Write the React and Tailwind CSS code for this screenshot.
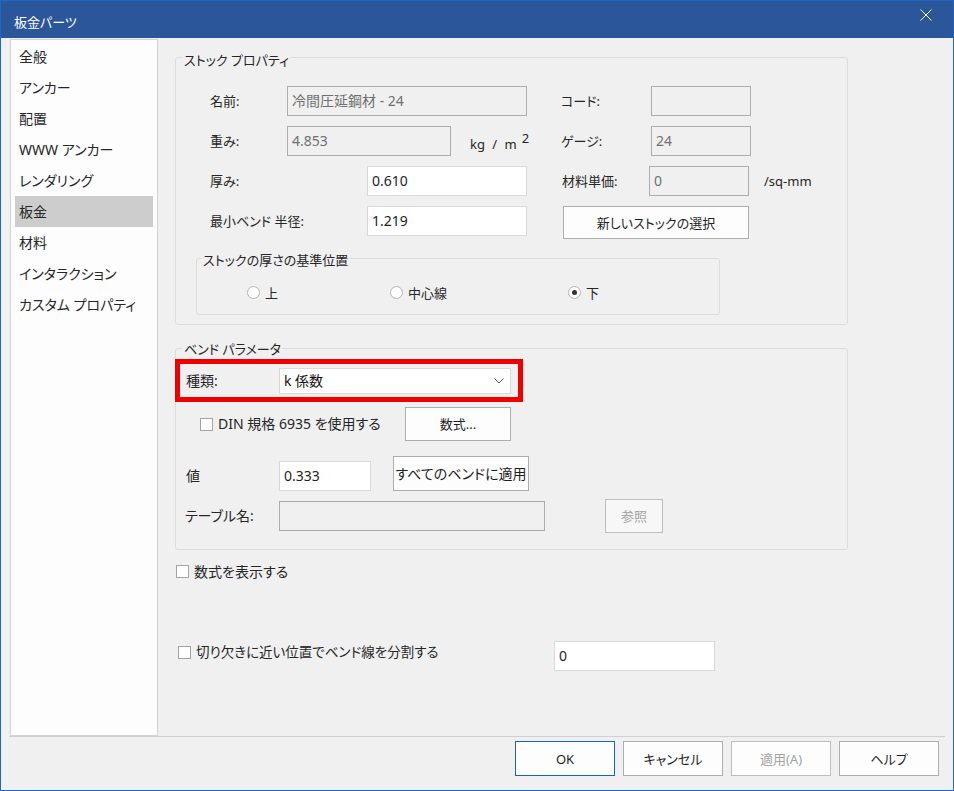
import React from "react";

const FONT = "font-['Noto_Sans','Noto_Sans_CJK_JP',sans-serif] [font-feature-settings:'palt']";

function Field({ value = "", w, h = 30, disabled = false }) {
  return (
    <div
      className={
        "flex items-center pl-[4px] text-[14px] leading-[16px] border shrink-0 " +
        (disabled
          ? "border-[#adadad] bg-[#f0f0f0] text-[#707070]"
          : "border-[#d9d9d9] bg-white text-[#1e1e1e]")
      }
      style={{ width: w, height: h }}
    >
      {value}
    </div>
  );
}

function Btn({ children, w, h, disabled = false, primary = false, className = "" }) {
  return (
    <div
      className={
        "flex items-center justify-center text-[13px] leading-[16px] border shrink-0 " +
        (primary
          ? "border-[#1e62c0] bg-[#fdfdfd] text-[#1e1e1e] "
          : disabled
          ? "border-[#bdbdbd] bg-[#f7f7f7] text-[#a3a3a3] "
          : "border-[#adadad] bg-[#fdfdfd] text-[#1e1e1e] ") +
        className
      }
      style={{ width: w, height: h }}
    >
      {children}
    </div>
  );
}

function Check() {
  return <div className="w-[13px] h-[13px] border border-[#a3a3a3] bg-white shrink-0" />;
}

function Radio({ checked }) {
  return (
    <div className="w-[13px] h-[13px] rounded-full border border-[#b3b3b3] bg-white flex items-center justify-center shrink-0">
      {checked && <div className="w-[5px] h-[5px] rounded-full bg-[#333]" />}
    </div>
  );
}

const sideItems = [
  "全般",
  "アンカー",
  "配置",
  "WWW アンカー",
  "レンダリング",
  "板金",
  "材料",
  "インタラクション",
  "カスタム プロパティ",
];

export default function App() {
  return (
    <div className={"w-[954px] h-[791px] border border-[#1c66cc] bg-[#f0f0f0] flex flex-col text-[#262626] " + FONT}>
      {/* Title bar */}
      <div className="h-[37px] bg-[#2b579a] flex justify-between items-start shrink-0">
        <div className="mt-[13px] ml-[13px] text-[13px] leading-[16px] text-white">板金パーツ</div>
        <svg className="mt-[8px] mr-[21px]" width="12" height="12" viewBox="0 0 12 12">
          <path d="M0.5 0.5 L11.5 11.5 M11.5 0.5 L0.5 11.5" stroke="#ffffff" strokeWidth="1" fill="none" />
        </svg>
      </div>

      {/* Body */}
      <div className="h-[698px] flex pl-[9px] shrink-0">
        {/* Sidebar */}
        <div className="mt-[1px] w-[148px] h-[697px] border border-[#d3d3d3] bg-[#fdfdfd] pt-[1px] shrink-0">
          {sideItems.map((t) => (
            <div
              key={t}
              className={
                "mx-[4px] h-[31px] pl-[4px] flex items-center text-[14px] leading-[16px] " +
                (t === "板金" ? "bg-[#cdcdcd]" : "")
              }
            >
              {t}
            </div>
          ))}
        </div>

        {/* Right panel */}
        <div className="flex-1 pl-[17px]">
          {/* Stock properties */}
          <div className="relative mt-[19px] w-[673px] h-[268px] border border-[#dcdcdc] rounded-[3px]">
            <div className="absolute left-[7px] top-[-6px] px-[1px] bg-[#f0f0f0] text-[13px] leading-[16px]">
              ストック プロパティ
            </div>
            <div className="pt-[28px] pl-[34px] text-[13px] leading-[16px]">
              <div className="flex items-center h-[30px]">
                <div className="w-[77px]">名前:</div>
                <Field w={240} value="冷間圧延鋼材 - 24" disabled />
                <div className="ml-[34px] w-[90px]">コード:</div>
                <Field w={100} disabled />
              </div>
              <div className="flex items-center h-[30px] mt-[10px]">
                <div className="w-[77px]">重み:</div>
                <Field w={164} value="4.853" disabled />
                <div className="ml-[19px] w-[91px] [word-spacing:4px]">
                  kg / m<span className="ml-[5px] inline-block align-[6px]">2</span>
                </div>
                <div className="w-[90px]">ゲージ:</div>
                <Field w={100} value="24" disabled />
              </div>
              <div className="flex items-center h-[30px] mt-[10px]">
                <div className="w-[157px]">厚み:</div>
                <Field w={160} value="0.610" />
                <div className="ml-[35px] w-[87px]">材料単価:</div>
                <Field w={100} value="0" disabled />
                <div className="ml-[15px]">/sq-mm</div>
              </div>
              <div className="flex items-start h-[33px] mt-[10px]">
                <div className="w-[157px] h-[30px] flex items-center">最小ベンド 半径:</div>
                <Field w={160} value="1.219" />
                <Btn w={186} h={33} className="ml-[36px]">新しいストックの選択</Btn>
              </div>
            </div>
            <div className="relative mt-[19px] ml-[20px] w-[524px] h-[57px] border border-[#dcdcdc] rounded-[3px] text-[13px] leading-[16px]">
              <div className="absolute left-[5px] top-[-7px] px-[1px] bg-[#f0f0f0]">ストックの厚さの基準位置</div>
              <div className="flex items-center h-[13px] mt-[27px] pl-[50px]">
                <div className="w-[143px] flex items-center gap-[5px]">
                  <Radio />
                  <span>上</span>
                </div>
                <div className="w-[178px] flex items-center gap-[5px]">
                  <Radio />
                  <span>中心線</span>
                </div>
                <div className="flex items-center gap-[5px]">
                  <Radio checked />
                  <span>下</span>
                </div>
              </div>
            </div>
          </div>

          {/* Bend parameters */}
          <div className="relative mt-[23px] w-[673px] h-[202px] border border-[#dcdcdc] rounded-[3px] text-[14px] leading-[16px]">
            <div className="absolute left-[7px] top-[-8px] px-[1px] bg-[#f0f0f0] text-[13px]">ベンド パラメータ</div>
            <div className="mt-[10px] -ml-[1px] w-[348px] h-[43px] border-[5px] border-[#f00000] flex items-center pl-[6px]">
              <div className="w-[93px]">種類:</div>
              <div className="w-[232px] h-[26px] border border-[#d9d9d9] bg-white flex items-center justify-between pl-[4px] pr-[6px]">
                <span className="text-[14px] text-[#111]">k 係数</span>
                <svg width="10" height="6" viewBox="0 0 10 6">
                  <path d="M0.5 0.5 L5 5 L9.5 0.5" stroke="#555" strokeWidth="1" fill="none" />
                </svg>
              </div>
            </div>
            <div className="mt-[5px] h-[34px] flex items-center">
              <div className="ml-[24px] w-[205px] flex items-center gap-[5px]">
                <Check />
                <span>DIN 規格 6935 を使用する</span>
              </div>
              <Btn w={106} h={34}>数式...</Btn>
            </div>
            <div className="mt-[15px] h-[35px] flex items-start">
              <div className="ml-[10px] w-[93px] h-[30px] mt-[5px] flex items-center">値</div>
              <div className="mt-[5px]">
                <Field w={92} value="0.333" />
              </div>
              <Btn w={136} h={35} className="ml-[22px] text-[14px]">すべてのベンドに適用</Btn>
            </div>
            <div className="mt-[8px] h-[34px] flex items-start">
              <div className="ml-[9px] w-[94px] h-[30px] mt-[2px] flex items-center">テーブル名:</div>
              <div className="mt-[2px]">
                <Field w={266} disabled />
              </div>
              <Btn w={58} h={34} disabled className="ml-[60px] bg-[#f0f0f0]">参照</Btn>
            </div>
          </div>

          {/* Show formula */}
          <div className="mt-[15px] ml-[1px] h-[13px] flex items-center gap-[5px] text-[14px] leading-[16px]">
            <Check />
            <span>数式を表示する</span>
          </div>

          {/* Split bend lines */}
          <div className="mt-[63px] h-[30px] flex items-start text-[13.5px] leading-[16px]">
            <div className="ml-[3px] w-[376px] h-[16px] mt-[3px] flex items-center gap-[5px]">
              <Check />
              <span>切り欠きに近い位置でベンド線を分割する</span>
            </div>
            <Field w={161} value="0" />
          </div>
        </div>
      </div>

      {/* Separator */}
      <div className="ml-[8px] w-[936px] h-[1px] bg-[#d0d0d0] shrink-0" />

      {/* Footer buttons */}
      <div className="flex justify-end pr-[14px] pt-[4px] gap-[8px]">
        <Btn w={100} h={35} primary>OK</Btn>
        <Btn w={100} h={35}>キャンセル</Btn>
        <Btn w={100} h={35} disabled className="bg-[#fdfdfd]">適用(A)</Btn>
        <Btn w={100} h={35}>ヘルプ</Btn>
      </div>
    </div>
  );
}
